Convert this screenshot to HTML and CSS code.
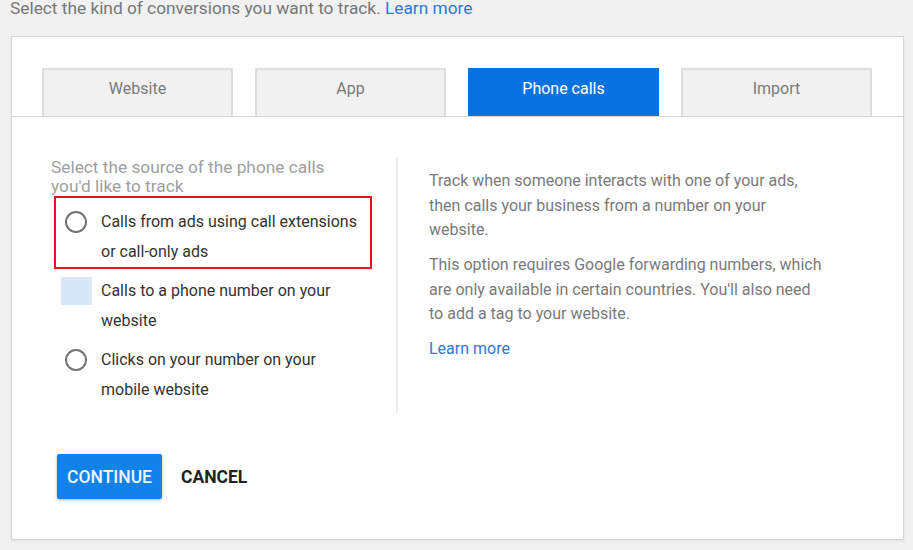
FILE: index.html
```html
<!DOCTYPE html>
<html lang="en">
<head>
<meta charset="utf-8">
<title>Conversions</title>
<link rel="stylesheet" href="styles.css">
</head>
<body>
<p class="intro">Select the kind of conversions you want to track. <a class="link" href="#">Learn more</a></p>
<div class="card">
  <div class="tabs">
    <div class="tab">Website</div>
    <div class="tab">App</div>
    <div class="tab active">Phone calls</div>
    <div class="tab">Import</div>
  </div>
  <div class="content">
    <div class="cols">
      <div class="left">
        <p class="src-head">Select the source of the phone calls you'd like to track</p>
        <div class="highlight">
          <div class="option">
            <span class="icon"><span class="radio"></span></span>
            <span class="opt-text">Calls from ads using call extensions or call-only ads</span>
          </div>
        </div>
        <div class="option opt-2">
          <span class="icon"><span class="square"></span></span>
          <span class="opt-text">Calls to a phone number on your website</span>
        </div>
        <div class="option opt-3">
          <span class="icon"><span class="radio"></span></span>
          <span class="opt-text">Clicks on your number on your mobile website</span>
        </div>
      </div>
      <div class="right">
        <p>Track when someone interacts with one of your ads, then calls your business from a number on your website.</p>
        <p>This option requires Google forwarding numbers, which are only available in certain countries. You'll also need to add a tag to your website.</p>
        <p><a class="link" href="#">Learn more</a></p>
      </div>
    </div>
    <div class="actions">
      <button class="btn-primary">CONTINUE</button>
      <button class="btn-text">CANCEL</button>
    </div>
  </div>
</div>
</body>
</html>
```

FILE: styles.css
```css
* { box-sizing: border-box; }
html, body { margin: 0; padding: 0; }
body {
  background: #f1f1f1;
  font-family: Roboto, "Liberation Sans", Arial, sans-serif;
  width: 913px;
  height: 550px;
  overflow: hidden;
}
.intro {
  margin: 0 0 0 10px;
  font-size: 17.3px;
  line-height: 16px;
  color: #777777;
}
.link {
  color: #2f78d4;
  text-decoration: none;
}
.card {
  margin: 20px 0 0 11px;
  width: 893px;
  height: 504px;
  background: #ffffff;
  border: 1px solid #d6d6d6;
  box-shadow: 0 1px 2px rgba(0,0,0,0.08);
}
.tabs {
  display: flex;
  gap: 22px;
  padding: 31px 30px 0 30px;
  border-bottom: 1px solid #d6d6d6;
}
.tab {
  width: 191px;
  height: 48px;
  padding-bottom: 10px;
  display: flex;
  align-items: center;
  justify-content: center;
  background: #f1f1f1;
  border: 2px solid #dcdcdc;
  border-bottom: none;
  color: #7a7a7a;
  font-size: 16px;
}
.tab.active {
  background: #0a71e0;
  border-color: #0a71e0;
  color: #ffffff;
}
.content {
  padding: 40px 39px 0 39px;
}
.cols {
  display: flex;
}
.left {
  width: 347px;
  padding-bottom: 8px;
  border-right: 2px solid #ececec;
}
.src-head {
  margin: 1px 0 0 0;
  width: 300px;
  font-size: 17.3px;
  line-height: 19px;
  color: #a0a0a0;
}
.highlight {
  margin-left: 3px;
  width: 318px;
  border: 2px solid #e8141c;
  padding: 9px 0 0 0;
}
.option {
  display: flex;
  align-items: flex-start;
  padding-left: 9px;
}
.highlight .option { padding-left: 4px; }
.opt-2 { margin-top: 7px; }
.opt-3 { margin-top: 9px; }
.icon {
  width: 32px;
  height: 30px;
  display: flex;
  align-items: center;
  justify-content: center;
  flex: none;
}
.radio {
  width: 22px;
  height: 22px;
  border: 2px solid #747474;
  border-radius: 50%;
}
.square {
  width: 31px;
  height: 28px;
  background: #d9e8f6;
}
.opt-text {
  margin-left: 9px;
  width: 264px;
  font-size: 16px;
  line-height: 30px;
  color: #333333;
}
.right {
  padding: 12px 0 0 31px;
}
.right p {
  margin: 0 0 10.5px 0;
  width: 397px;
  font-size: 16px;
  line-height: 24.5px;
  color: #7a7a7a;
}
.actions {
  display: flex;
  align-items: center;
  margin-top: 41px;
  padding-left: 6px;
}
.btn-primary {
  width: 105px;
  height: 45px;
  border: none;
  border-radius: 2px;
  background: #1282e8;
  color: #eef5fd;
  font-family: inherit;
  font-size: 17.5px;
  font-weight: 500;
  box-shadow: 0 1px 3px rgba(0,0,0,0.3);
  padding: 0;
}
.btn-text {
  margin-left: 19px;
  border: none;
  background: none;
  padding: 0;
  color: #222222;
  font-family: inherit;
  font-size: 17.5px;
  font-weight: 700;
}
```
